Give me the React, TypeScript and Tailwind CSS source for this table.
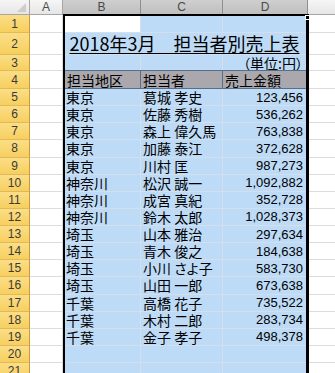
import React from 'react'

const jp = "font-['Noto_Sans_CJK_JP','Noto_Sans',sans-serif]"
const ui = "font-['Liberation_Sans',Arial,sans-serif]"

const data: [string, string, string][] = [
  ['東京', '葛城 孝史', '123,456'],
  ['東京', '佐藤 秀樹', '536,262'],
  ['東京', '森上 偉久馬', '763,838'],
  ['東京', '加藤 泰江', '372,628'],
  ['東京', '川村 匡', '987,273'],
  ['神奈川', '松沢 誠一', '1,092,882'],
  ['神奈川', '成宮 真紀', '352,728'],
  ['神奈川', '鈴木 太郎', '1,028,373'],
  ['埼玉', '山本 雅治', '297,634'],
  ['埼玉', '青木 俊之', '184,638'],
  ['埼玉', '小川 さよ子', '583,730'],
  ['埼玉', '山田 一郎', '673,638'],
  ['千葉', '高橋 花子', '735,522'],
  ['千葉', '木村 二郎', '283,734'],
  ['千葉', '金子 孝子', '498,378'],
]

// one sheet row: row header + A + (B C D) + E
function Row({ n, h, b, c, d, white1 }: { n: number; h: string; b?: React.ReactNode; c?: React.ReactNode; d?: React.ReactNode; white1?: boolean }) {
  return (
    <div className={`flex ${h}`}>
      <div className={`w-[30px] shrink-0 flex items-center justify-center bg-gradient-to-b from-[#fbde86] to-[#f6cf5e] border-b border-r border-b-[#e2b85a] border-r-[#c99b3a] text-[12px] text-[#3a3a3a] ${ui}`}>{n}</div>
      <div className="w-[33px] shrink-0 bg-white border-b border-r border-[#dadcdd]" />
      <div className={`w-[78px] shrink-0 flex items-center pl-[3px] border-b border-r border-[#d3dfea] ${white1 ? 'bg-white' : 'bg-[#bddbf6]'}`}>{b}</div>
      <div className="w-[82px] shrink-0 flex items-center pl-[2px] border-b border-r border-[#d3dfea] bg-[#bddbf6]">{c}</div>
      <div className="w-[85px] shrink-0 flex items-center justify-end pr-[4px] border-b border-r border-[#d3dfea] bg-[#bddbf6]">{d}</div>
      <div className="flex-1 bg-white border-b border-[#dadcdd]" />
    </div>
  )
}

export default function App() {
  const txt = `text-[14px] leading-none text-black whitespace-nowrap ${jp}`
  const num = `text-[13px] leading-none text-black ${ui}`
  return (
    <div className="relative w-[335px] h-[373px] overflow-hidden bg-white">
      {/* column headers */}
      <div className={`flex h-[15px] text-[12px] text-[#4a4a4a] ${ui}`}>
        <div className="relative w-[30px] shrink-0 bg-gradient-to-b from-[#f6f6f6] to-[#e6e6e6] border-b border-r border-[#a6a6a6]">
          <svg className="absolute left-[17px] top-[3px]" width="9" height="9" viewBox="0 0 9 9">
            <polygon points="9,0 9,9 0,9" fill="#cdcdcd" />
          </svg>
        </div>
        <div className="w-[33px] shrink-0 flex items-center justify-center bg-gradient-to-b from-[#f6f6f6] to-[#e6e6e6] border-b border-r border-[#a6a6a6]">A</div>
        <div className="w-[78px] shrink-0 flex items-center justify-center bg-gradient-to-b from-[#cfcfcf] to-[#bfbfbf] border-b border-r border-[#8f8f8f]">B</div>
        <div className="w-[82px] shrink-0 flex items-center justify-center bg-gradient-to-b from-[#cfcfcf] to-[#bfbfbf] border-b border-r border-[#8f8f8f]">C</div>
        <div className="w-[85px] shrink-0 flex items-center justify-center bg-gradient-to-b from-[#cfcfcf] to-[#bfbfbf] border-b border-r border-[#8f8f8f]">D</div>
        <div className="flex-1 bg-gradient-to-b from-[#f6f6f6] to-[#e6e6e6] border-b border-[#a6a6a6]" />
      </div>

      <Row n={1} h="h-[18px]" white1 />

      {/* title row, centered across B:D */}
      <div className="flex h-[22px]">
        <div className={`w-[30px] shrink-0 flex items-center justify-center bg-gradient-to-b from-[#fbde86] to-[#f6cf5e] border-b border-r border-b-[#e2b85a] border-r-[#c99b3a] text-[12px] text-[#3a3a3a] ${ui}`}>2</div>
        <div className="w-[33px] shrink-0 bg-white border-b border-r border-[#dadcdd]" />
        <div className="w-[245px] shrink-0 flex items-end justify-center pb-[2px] pr-[1px] bg-[#bddbf6] border-b border-r border-[#d3dfea]">
          <span className={`text-[18px] leading-none text-black underline underline-offset-[2px] whitespace-nowrap ${jp}`}>2018年3月　担当者別売上表</span>
        </div>
        <div className="flex-1 bg-white border-b border-[#dadcdd]" />
      </div>

      <Row n={3} h="h-[16px]" d={<span className={`text-[14px] leading-none text-black whitespace-nowrap ${jp} [font-feature-settings:'palt']`}>（単位:円）</span>} />

      {/* header row */}
      <div className="flex h-[18px]">
        <div className={`w-[30px] shrink-0 flex items-center justify-center bg-gradient-to-b from-[#fbde86] to-[#f6cf5e] border-b border-r border-b-[#e2b85a] border-r-[#c99b3a] text-[12px] text-[#3a3a3a] ${ui}`}>4</div>
        <div className="w-[33px] shrink-0 bg-white border-b border-r border-[#dadcdd]" />
        <div className="w-[78px] shrink-0 flex items-center pl-[3px] bg-[#aaa7ad] border border-[#56708c] -mt-px">
          <span className={txt}>担当地区</span>
        </div>
        <div className="w-[82px] shrink-0 flex items-center pl-[2px] bg-[#aaa7ad] border-y border-r border-[#56708c] -mt-px">
          <span className={txt}>担当者</span>
        </div>
        <div className="w-[85px] shrink-0 flex items-center pl-[2px] bg-[#aaa7ad] border-y border-r border-[#56708c] border-r-[#9a98a2] -mt-px">
          <span className={txt}>売上金額</span>
        </div>
        <div className="flex-1 bg-white border-b border-[#dadcdd]" />
      </div>

      {data.map(([area, name, amount], i) => (
        <Row
          key={i}
          n={i + 5}
          h="h-[17.13px]"
          b={<span className={txt}>{area}</span>}
          c={<span className={`${txt} [font-feature-settings:'palt']`}>{name}</span>}
          d={<span className={num}>{amount}</span>}
        />
      ))}

      <Row n={20} h="h-[17px]" />
      <Row n={21} h="h-[17px]" />

      {/* selection border */}
      <div className="absolute left-[63px] top-[14px] w-[246px] h-[380px] border-t-2 border-l-2 border-r-[3px] border-black pointer-events-none" />
      <div className="absolute left-[305px] top-[15px] w-[5px] h-[5px] bg-black border border-white" />
    </div>
  )
}
